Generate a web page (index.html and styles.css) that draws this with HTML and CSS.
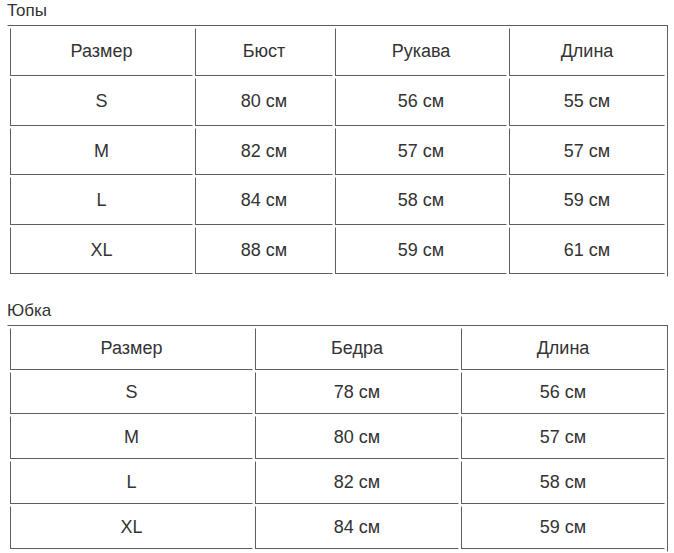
FILE: index.html
```html
<!DOCTYPE html>
<html lang="ru">
<head>
<meta charset="utf-8">
<link rel="stylesheet" href="styles.css">
</head>
<body>
<div class="page">
  <div class="title t1">Топы</div>
  <table class="size-table tops">
    <colgroup>
      <col class="c1"><col class="c2"><col class="c3"><col class="c4">
    </colgroup>
    <tr class="r-a"><td>Размер</td><td>Бюст</td><td>Рукава</td><td>Длина</td></tr>
    <tr class="r-a"><td>S</td><td>80 см</td><td>56 см</td><td>55 см</td></tr>
    <tr class="r-b"><td>M</td><td>82 см</td><td>57 см</td><td>57 см</td></tr>
    <tr class="r-a"><td>L</td><td>84 см</td><td>58 см</td><td>59 см</td></tr>
    <tr class="r-b"><td>XL</td><td>88 см</td><td>59 см</td><td>61 см</td></tr>
  </table>
  <div class="title t2">Юбка</div>
  <table class="size-table skirt">
    <colgroup>
      <col class="k1"><col class="k2"><col class="k3">
    </colgroup>
    <tr class="s-a"><td>Размер</td><td>Бедра</td><td>Длина</td></tr>
    <tr class="s-a"><td>S</td><td>78 см</td><td>56 см</td></tr>
    <tr class="s-b"><td>M</td><td>80 см</td><td>57 см</td></tr>
    <tr class="s-b"><td>L</td><td>82 см</td><td>58 см</td></tr>
    <tr class="s-b"><td>XL</td><td>84 см</td><td>59 см</td></tr>
  </table>
</div>
</body>
</html>
```

FILE: styles.css
```css
html, body {
  margin: 0;
  padding: 0;
  background: #ffffff;
}
body {
  font-family: "Liberation Sans", Arial, sans-serif;
  color: #333333;
}
.page {
  padding: 2px 0 0 7px;
}
.title {
  font-size: 17px;
  line-height: 18px;
  margin: 0 0 5px 0;
}
.t2 {
  margin-top: 25px;
}
.size-table {
  border-collapse: separate;
  border-spacing: 2px;
  table-layout: fixed;
  border-top: 1px solid #5e5e5e;
  border-right: 1px solid #5e5e5e;
  border-left: 1px solid #ffffff;
  border-bottom: 1px solid #ffffff;
  width: 661px;
}
.size-table td {
  border-left: 1px solid #5e5e5e;
  border-bottom: 1px solid #5e5e5e;
  border-top: 1px solid #ffffff;
  border-right: 1px solid #ffffff;
  padding: 0 0 2px 0;
  text-align: center;
  vertical-align: middle;
  font-size: 18px;
  line-height: 20px;
  color: #333333;
  box-sizing: border-box;
}
.c1 { width: 183px; }
.c2 { width: 138px; }
.c3 { width: 172px; }
.c4 { width: 156px; }
.k1 { width: 243px; }
.k2 { width: 204px; }
.k3 { width: 204px; }
.r-a td { height: 48px; }
.r-b td { height: 47px; }
.s-a td { height: 42px; }
.s-b td { height: 43px; }
```
